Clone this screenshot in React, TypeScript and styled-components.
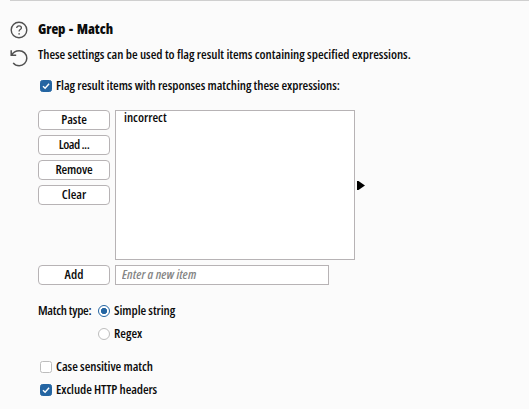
import React from "react";
import styled, { createGlobalStyle } from "styled-components";

const GlobalStyle = createGlobalStyle`
  * { box-sizing: border-box; }
  body { margin: 0; background: #fbfbfb; color: #0c0c0c; overflow: hidden; }
  body, button, input { font: 600 condensed 13px/16px "Open Sans", "Noto Sans", sans-serif; }
`;

const Panel = styled.main`
  display: grid;
  grid-template-columns: 18px 1fr;
  column-gap: 10px;
  width: 519px;
  height: 409px;
  margin-left: 10px;
  border-top: 1px solid #cfcfcf;
`;
const Rail = styled.aside`
  display: flex;
  flex-direction: column;
  gap: 10px;
  padding-top: 20px;
  svg { display: block; }
`;
const Content = styled.section`
  display: flex;
  flex-direction: column;
  align-items: flex-start;
  white-space: nowrap;
`;
const Title = styled.h1`
  margin: 19px 0 0;
  font-size: 14px;
  font-weight: 800;
  line-height: 18px;
  letter-spacing: -0.06px;
  word-spacing: 1px;
`;
const Text = styled.span<{ $track?: number }>`
  height: 16px;
  margin-top: -1px;
  letter-spacing: ${(p) => p.$track ?? 0}px;
`;
const Description = styled.p`
  margin: 8px 0 0;
  letter-spacing: -0.02px;
`;
const Option = styled.label<{ $top?: number; $left?: number }>`
  display: flex;
  align-items: center;
  gap: 4px;
  height: 16px;
  margin: ${(p) => p.$top ?? 0}px 0 0 ${(p) => p.$left ?? 0}px;
  ${Text} { margin-top: -2px; }
`;
const Box = styled.span<{ $on?: boolean }>`
  display: grid;
  place-items: center;
  width: 12px;
  height: 12px;
  border: 1px solid ${(p) => (p.$on ? "#2465a2" : "#bdbdbd")};
  border-radius: 2.5px;
  background: ${(p) => (p.$on ? "#2465a2" : "#fff")};
`;
const Dot = styled.span<{ $on?: boolean }>`
  width: 12px;
  height: 12px;
  border: ${(p) => (p.$on ? "1.5px solid #2465a2" : "1px solid #bdbdbd")};
  border-radius: 50%;
  background: ${(p) => (p.$on ? "radial-gradient(circle, #2465a2 2.8px, #fff 3.5px)" : "#fff")};
`;
const Editor = styled.div`
  display: grid;
  grid-template-columns: 72px 240px auto;
  column-gap: 5px;
  row-gap: 5px;
  margin-top: 16px;
`;
const Buttons = styled.div`
  display: flex;
  flex-direction: column;
  gap: 5px;
`;
const Button = styled.button<{ $track?: number }>`
  width: 72px;
  height: 20px;
  padding: 0 0 1px;
  border: 1px solid #b7b3b5;
  border-radius: 4px;
  background: #fff;
  color: inherit;
  line-height: 17px;
  letter-spacing: ${(p) => p.$track ?? 0}px;
`;
const List = styled.ul`
  height: 150px;
  margin: 0;
  padding: 0 8px;
  border: 1px solid #b7b3b5;
  background: #fff;
  list-style: none;
  line-height: 12px;
`;
const Marker = styled.div`
  align-self: center;
  margin-left: -3px;
  svg { display: block; }
`;
const Entry = styled.input`
  width: 214px;
  height: 20px;
  padding: 0 6px 2px;
  border: 1px solid #b7b3b5;
  background: #fff;
  &::placeholder {
    color: #858585;
    opacity: 1;
    font-style: italic;
    letter-spacing: 0.08px;
  }
`;
const MatchType = styled.div`
  display: grid;
  grid-template-columns: 60px auto;
  row-gap: 7px;
  margin-top: 18px;
`;
const Regex = styled.div`
  grid-column: 2;
`;

const HelpIcon = () => (
  <svg width="18" height="18" viewBox="0 0 18 18" fill="none" stroke="#505050">
    <circle cx="9" cy="9" r="7.8" strokeWidth="1.4" />
    <path d="M6.7 7.1C6.7 5.6 7.7 4.8 9 4.8s2.4.8 2.4 2.1c0 1.6-2.3 1.7-2.3 3.3v.4" strokeWidth="1.3" />
    <circle cx="9.1" cy="12.9" r=".8" fill="#505050" stroke="none" />
  </svg>
);
const ResetIcon = () => (
  <svg width="18" height="18" viewBox="0 0 18 18" fill="none" stroke="#505050" strokeWidth="1.5">
    <path d="M1.2 1.3v5h5M1.5 6.2C3.2 3.3 6.1 1.7 9.1 1.7c4.3 0 7.7 3.3 7.7 7.5S13.4 16.8 9.2 16.8c-2.7 0-4.6-1.1-6-2.9" />
  </svg>
);

type CheckProps = { on?: boolean; label: string; track?: number; top?: number; left?: number };

const Check = ({ on, label, track, top, left }: CheckProps) => (
  <Option $top={top} $left={left}>
    <Box $on={on}>
      {on && (
        <svg width="10" height="10" viewBox="0 0 10 10" fill="none" stroke="#fff" strokeWidth="1.4">
          <path d="M2 5.2 4.1 7.3 8.1 2.8" />
        </svg>
      )}
    </Box>
    <Text $track={track}>{label}</Text>
  </Option>
);

export default function App() {
  return (
    <>
      <GlobalStyle />
      <Panel>
        <Rail>
          <HelpIcon />
          <ResetIcon />
        </Rail>
        <Content>
          <Title>Grep - Match</Title>
          <Description>These settings can be used to flag result items containing specified expressions.</Description>
          <Check on top={16} left={2} track={-0.06} label="Flag result items with responses matching these expressions:" />
          <Editor>
            <Buttons>
              <Button>Paste</Button>
              <Button $track={-0.5}>Load ...</Button>
              <Button $track={-0.2}>Remove</Button>
              <Button>Clear</Button>
            </Buttons>
            <List>
              <li>incorrect</li>
            </List>
            <Marker>
              <svg width="8" height="9" viewBox="0 0 8 9">
                <path d="M0 0h1.5L8 4.5 1.5 9H0z" fill="#000" />
              </svg>
            </Marker>
            <Button>Add</Button>
            <Entry placeholder="Enter a new item" />
          </Editor>
          <MatchType>
            <Text $track={-0.28}>Match type:</Text>
            <Option>
              <Dot $on />
              <Text $track={-0.07}>Simple string</Text>
            </Option>
            <Regex>
              <Option>
                <Dot />
                <Text>Regex</Text>
              </Option>
            </Regex>
          </MatchType>
          <Check top={17} left={2} track={-0.05} label="Case sensitive match" />
          <Check on top={7} left={2} track={-0.1} label="Exclude HTTP headers" />
        </Content>
      </Panel>
    </>
  );
}
